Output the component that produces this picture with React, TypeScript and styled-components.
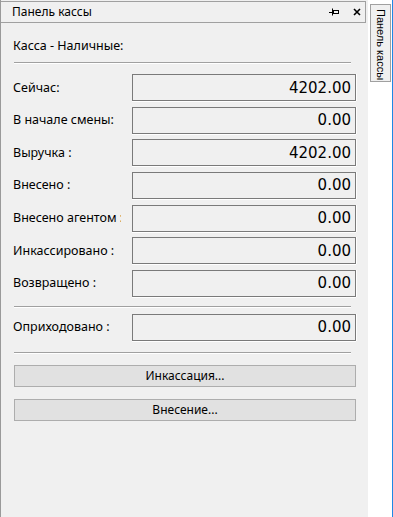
import React, { FC } from 'react';
import styled, { createGlobalStyle } from 'styled-components';

const GlobalStyle = createGlobalStyle`
  html, body {
    margin: 0;
    padding: 0;
    background: #ffffff;
  }
  body {
    font-family: "Noto Sans", "Liberation Sans", sans-serif;
    font-size: 12px;
    color: #000;
  }
`;

type Row = { label: string; value: string };

const rows: Row[] = [
  { label: 'Сейчас:', value: '4202.00' },
  { label: 'В начале смены:', value: '0.00' },
  { label: 'Выручка :', value: '4202.00' },
  { label: 'Внесено :', value: '0.00' },
  { label: 'Внесено агентом :', value: '0.00' },
  { label: 'Инкассировано :', value: '0.00' },
  { label: 'Возвращено :', value: '0.00' },
];

const PinIcon: FC = () => (
  <svg width="10" height="8" viewBox="0 0 10 8">
    <path d="M0 4.5h3M3.5 0.5v7" stroke="#000" strokeWidth="1" fill="none" />
    <rect x="4.5" y="2.5" width="5" height="3" stroke="#000" strokeWidth="1" fill="none" />
    <path d="M4 5.5h6" stroke="#000" strokeWidth="1" />
  </svg>
);

const CloseIcon: FC = () => (
  <svg width="8" height="8" viewBox="0 0 8 8">
    <path d="M1 1l6 6M7 1l-6 6" stroke="#000" strokeWidth="1.6" fill="none" />
  </svg>
);

const App: FC = () => {
  return (
    <Screen>
      <GlobalStyle />
      <Panel>
        <TitleBar>
          <Title>Панель кассы</Title>
          <TitleTools>
            <PinIcon />
            <CloseIcon />
          </TitleTools>
        </TitleBar>
        <Body>
          <Heading>Касса - Наличные:</Heading>
          <Separator $top={8} $bottom={10} />
          <Rows>
            {rows.map((r) => (
              <FieldRow key={r.label}>
                <Label>{r.label}</Label>
                <Field>{r.value}</Field>
              </FieldRow>
            ))}
          </Rows>
          <Separator $top={9} $bottom={6} />
          <FieldRow>
            <Label>Оприходовано :</Label>
            <Field>0.00</Field>
          </FieldRow>
          <Separator $top={11} $bottom={11} />
          <Buttons>
            <ActionButton>Инкассация...</ActionButton>
            <ActionButton>Внесение...</ActionButton>
          </Buttons>
        </Body>
      </Panel>
      <SideStrip>
        <SideTab>Панель кассы</SideTab>
      </SideStrip>
    </Screen>
  );
};

const Screen = styled.div`
  display: flex;
  width: 393px;
  height: 517px;
  overflow: hidden;
`;

const Panel = styled.div`
  width: 367px;
  height: 517px;
  background: #f0f0f0;
  border-left: 1px solid #9a9a9a;
  display: flex;
  flex-direction: column;
`;

const TitleBar = styled.div`
  margin-top: 1px;
  margin-right: 2px;
  height: 20px;
  border-top: 1px solid #a0a0a0;
  border-bottom: 1px solid #a0a0a0;
  border-right: 1px solid #a0a0a0;
  display: flex;
  align-items: center;
  justify-content: space-between;
  padding-left: 11px;
  padding-right: 4px;
`;

const Title = styled.span`
  font-size: 12px;
  line-height: 16px;
`;

const TitleTools = styled.div`
  display: flex;
  align-items: center;
  gap: 14px;
  svg {
    display: block;
  }
`;

const Body = styled.div`
  padding: 15px 12px 0 12px;
  display: flex;
  flex-direction: column;
`;

const Heading = styled.div`
  line-height: 16px;
  height: 16px;
  font-size: 12.5px;
`;

const Separator = styled.div<{ $top: number; $bottom: number }>`
  margin: ${({ $top }) => $top}px 5px ${({ $bottom }) => $bottom}px 1px;
  height: 1px;
  background: #a0a0a0;
  border-bottom: 1px solid #ffffff;
`;

const Rows = styled.div`
  display: flex;
  flex-direction: column;
  gap: 5.67px;
`;

const FieldRow = styled.div`
  display: flex;
  align-items: center;
  height: 27px;
`;

const Label = styled.div`
  width: 108px;
  margin-right: 11px;
  white-space: nowrap;
  overflow: hidden;
  font-size: 12.5px;
  line-height: 16px;
`;

const Field = styled.div`
  box-sizing: border-box;
  width: 224px;
  height: 27px;
  border: 1px solid #7a7a7a;
  box-shadow: 0 1px 0 #ffffff, 1px 0 0 #ffffff;
  background: #f0f0f0;
  display: flex;
  align-items: center;
  justify-content: flex-end;
  padding-right: 4px;
  font-family: "DejaVu Sans", "Liberation Sans", sans-serif;
  font-size: 15px;
  color: #000;
`;

const Buttons = styled.div`
  display: flex;
  flex-direction: column;
  gap: 12px;
  padding-left: 1px;
`;

const ActionButton = styled.button`
  box-sizing: border-box;
  width: 342px;
  height: 22px;
  margin: 0;
  padding: 0;
  border: 1px solid #adadad;
  background: #e1e1e1;
  font-family: "Noto Sans", "Liberation Sans", sans-serif;
  font-size: 12px;
  color: #000;
`;

const SideStrip = styled.div`
  flex: 1;
  height: 517px;
  background: #ffffff;
  border-right: 1px solid #1e88e5;
  padding-left: 2px;
  padding-top: 4px;
  box-sizing: border-box;
`;

const SideTab = styled.div`
  box-sizing: border-box;
  width: 21px;
  height: 78px;
  border: 1px solid #a0a0a0;
  background: #f0f0f0;
  writing-mode: vertical-rl;
  font-family: "Liberation Sans", "Noto Sans", sans-serif;
  font-size: 11px;
  line-height: 18px;
  padding-top: 4px;
  white-space: nowrap;
  overflow: hidden;
`;

export default App;
